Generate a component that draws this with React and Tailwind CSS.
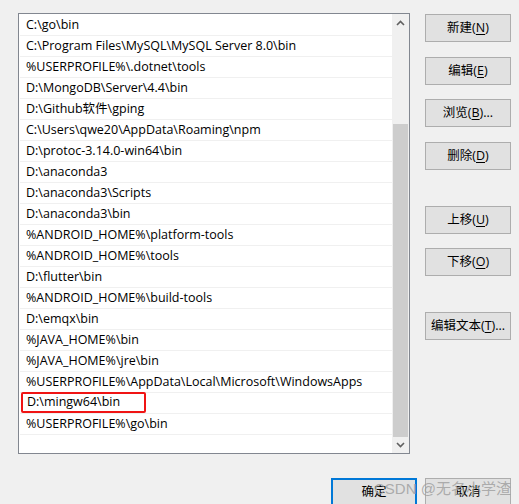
const paths = [
  "C:\\go\\bin",
  "C:\\Program Files\\MySQL\\MySQL Server 8.0\\bin",
  "%USERPROFILE%\\.dotnet\\tools",
  "D:\\MongoDB\\Server\\4.4\\bin",
  "D:\\Github软件\\gping",
  "C:\\Users\\qwe20\\AppData\\Roaming\\npm",
  "D:\\protoc-3.14.0-win64\\bin",
  "D:\\anaconda3",
  "D:\\anaconda3\\Scripts",
  "D:\\anaconda3\\bin",
  "%ANDROID_HOME%\\platform-tools",
  "%ANDROID_HOME%\\tools",
  "D:\\flutter\\bin",
  "%ANDROID_HOME%\\build-tools",
  "D:\\emqx\\bin",
  "%JAVA_HOME%\\bin",
  "%JAVA_HOME%\\jre\\bin",
  "%USERPROFILE%\\AppData\\Local\\Microsoft\\WindowsApps",
  "D:\\mingw64\\bin",
  "%USERPROFILE%\\go\\bin",
];

const font = { fontFamily: '"Open Sans", "Noto Sans CJK SC", sans-serif' };

// label like 新建(N) with the mnemonic letter underlined
const WinButton = ({ label, hotkey, dots, className = "" }) => (
  <div
    className={`h-[28px] w-[86px] flex items-center justify-center border border-[#adadad] bg-[#e1e1e1] text-[12.5px] text-black ${className}`}
  >
    {label}
    {hotkey && (
      <>
        (<span className="underline underline-offset-2">{hotkey}</span>)
      </>
    )}
    {dots && "..."}
  </div>
);

const Arrow = ({ down }) => (
  <svg width="9" height="6" viewBox="0 0 9 6" className={down ? "rotate-180" : ""}>
    <polyline points="1,5 4.5,1.5 8,5" fill="none" stroke="#606060" strokeWidth="1.6" />
  </svg>
);

export default function App() {
  return (
    <div className="relative w-[519px] h-[504px] overflow-hidden bg-[#f0f0f0]" style={font}>
      <div className="flex pl-[18px] pt-[13px]">
        {/* path list */}
        <div className="w-[392px] h-[441px] flex border border-[#828790] bg-white">
          <div className="flex-1 pt-[1px]">
            {paths.map((p) => (
              <div
                key={p}
                className="h-[21px] ml-[1px] border-b border-[#f0f0f0] flex items-center pl-[6px] text-[12.5px] text-black whitespace-nowrap"
              >
                {p === "D:\\mingw64\\bin" ? (
                  <span className="-ml-[5px] -mt-[2px] h-[21px] w-[125px] pl-[4px] border-2 border-[#f01414] rounded-[2px] flex items-center">
                    {p}
                  </span>
                ) : (
                  p
                )}
              </div>
            ))}
          </div>
          {/* scrollbar */}
          <div className="w-[17px] flex flex-col bg-[#f0f0f0]">
            <div className="h-[17px] flex items-center justify-center">
              <Arrow />
            </div>
            <div className="h-[93px]" />
            <div className="h-[313px] mx-[1px] bg-[#cdcdcd]" />
            <div className="h-[16px] flex items-center justify-center">
              <Arrow down />
            </div>
          </div>
        </div>

        {/* side buttons */}
        <div className="ml-[15px] flex flex-col">
          <WinButton label="新建" hotkey="N" className="mt-[1px]" />
          <WinButton label="编辑" hotkey="E" className="mt-[15px]" />
          <WinButton label="浏览" hotkey="B" dots className="mt-[14px]" />
          <WinButton label="删除" hotkey="D" className="mt-[15px]" />
          <WinButton label="上移" hotkey="U" className="mt-[36px]" />
          <WinButton label="下移" hotkey="O" className="mt-[14px]" />
          <WinButton label="编辑文本" hotkey="T" dots className="mt-[36px]" />
        </div>
      </div>

      {/* bottom buttons */}
      <div className="flex pl-[331px] mt-[24px] gap-[8px]">
        <div className="h-[28px] w-[86px] flex items-center justify-center border-2 border-[#0078d7] bg-[#e1e1e1] text-[12.5px] text-black">
          确定
        </div>
        <WinButton label="取消" />
      </div>

      {/* watermark */}
      <div
        className="absolute left-[374px] top-[478px] text-[15px] text-[#9c9c9c]/80 whitespace-nowrap"
        style={{ fontFamily: '"Liberation Sans", "Noto Sans CJK SC", sans-serif' }}
      >
        CSDN @无名小学渣
      </div>
    </div>
  );
}
